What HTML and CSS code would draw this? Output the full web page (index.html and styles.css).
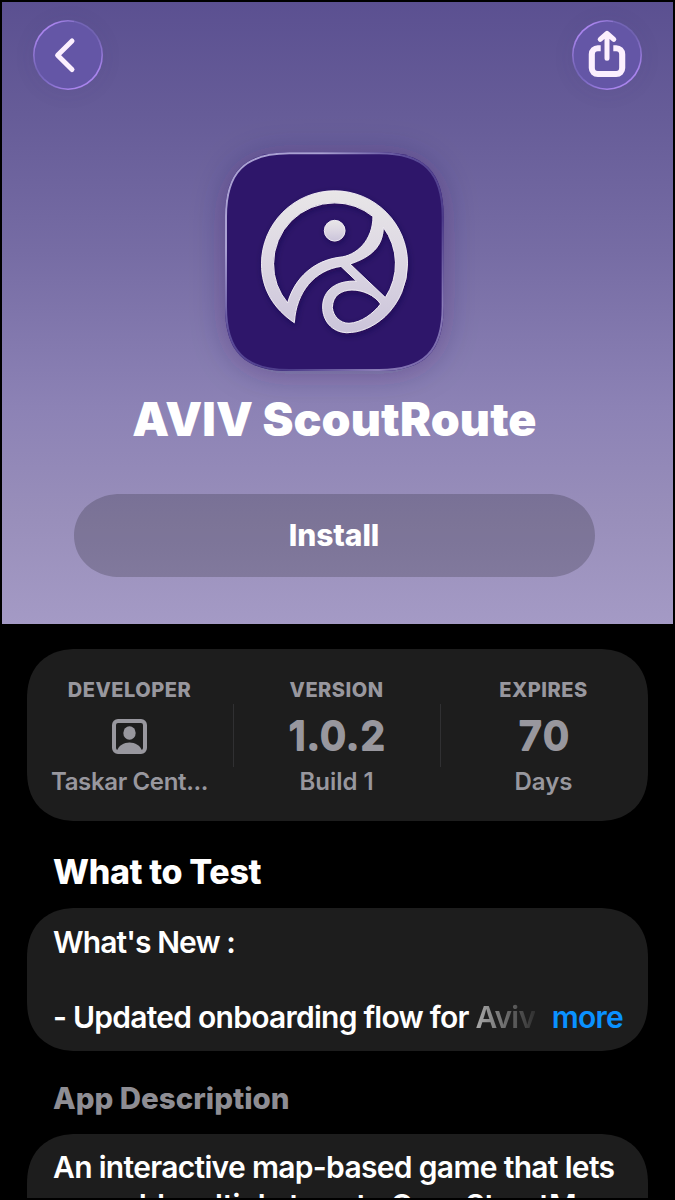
FILE: index.html
```html
<!DOCTYPE html>
<html lang="en">
<head>
<meta charset="utf-8">
<title>AVIV ScoutRoute</title>
<link rel="stylesheet" href="styles.css">
</head>
<body>
<main class="screen">
  <header class="hero">
    <nav class="nav">
      <button class="nav-button" aria-label="Back">
        <svg viewBox="0 0 70 70"><circle class="rim" cx="35" cy="35" r="33.4"/><path class="chevron" d="M39 21L24.6 35.2l14.4 14.3"/></svg>
      </button>
      <button class="nav-button" aria-label="Share">
        <svg viewBox="0 0 70 70"><circle class="rim" cx="35" cy="35" r="33.4"/><path class="tray" d="M28.7 28.2h-2.9a6 6 0 0 0-6 6v13.8a6 6 0 0 0 6 6h18.4a6 6 0 0 0 6-6V34.2a6 6 0 0 0-6-6h-2.9"/><path class="arrow" d="M35 38.3V14M28.2 19.4L35 13.4l6.8 6"/></svg>
      </button>
    </nav>
    <svg class="app-icon" viewBox="0 0 720 720" aria-label="App icon">
      <defs>
        <linearGradient id="edge" x1="0" y1="0" x2="1" y2="1">
          <stop offset="0" stop-color="#aaa1d2"/><stop offset=".22" stop-color="#aaa1d2"/><stop offset=".42" stop-color="#5b4c98"/><stop offset=".65" stop-color="#4d3c8a"/><stop offset=".85" stop-color="#8b7db8"/><stop offset="1" stop-color="#6d5ca4"/>
        </linearGradient>
        <linearGradient id="metal" x1="0" y1="0" x2="0" y2="1">
          <stop offset="0" stop-color="#e8e6e7"/><stop offset=".4" stop-color="#dfdae4"/><stop offset="1" stop-color="#cbc4da"/>
        </linearGradient>
        <filter id="cast" x="-30%" y="-30%" width="160%" height="160%"><feDropShadow dx="0" dy="10" stdDeviation="50" flood-color="#2c2352" flood-opacity=".3"/></filter>
        <filter id="lift" x="-20%" y="-20%" width="140%" height="140%"><feDropShadow dx="3" dy="7" stdDeviation="10" flood-color="#12063f" flood-opacity=".5"/></filter>
      </defs>
      <path filter="url(#cast)" fill="#2d176b" d="M30 230C30 95 88 37 223 37H493C628 37 686 95 686 230V500C686 635 628 693 493 693H223C88 693 30 635 30 500Z"/>
      <path fill="none" stroke="url(#edge)" stroke-width="6" d="M33 230C33 97 90 40 223 40H493C626 40 683 97 683 230V500C683 633 626 690 493 690H223C90 690 33 633 33 500Z"/>
      <g filter="url(#lift)" fill="url(#metal)" stroke="#f1edf4" stroke-width="3" stroke-linejoin="round">
        <path fill-rule="evenodd" d="M238 548C177 507 139.5 448 139.5 371.5A219 219 0 0 1 577.5 371.5A219 219 0 0 1 510 529.6C475 561 435 578 395 578C350 576 323 542 323 501C323 450 365 420 425 424L378 379C300 390 243 455 238 548Z
          M218 488.8A183 183 0 0 1 175.5 371.5A183 183 0 0 1 358.5 188.5A183 183 0 0 1 474 229.5C474 300 425 348 372 352C300 362 240 410 218 488.8Z
          M505 261.8A183 183 0 0 1 511 472.7L405 372C470 350 503 320 505 261.8Z
          M497 492C460 438 352 430 352 503C354 528 375 550 402 550C440 548 475 520 497 492Z"/>
        <circle cx="359" cy="272" r="31"/>
      </g>
    </svg>
    <h1 class="app-name"><span>AVIV ScoutRoute</span></h1>
    <button class="install"><span>Install</span></button>
  </header>

  <section class="card facts">
    <div class="fact">
      <span class="fact-label">DEVELOPER</span>
      <svg class="person" viewBox="0 0 35 35"><rect x="2" y="2" width="31" height="31" rx="4"/><ellipse cx="17.5" cy="14" rx="6.2" ry="6.8"/><path d="M5 32C8 20.5 27 20.5 30 32Z"/></svg>
      <span class="fact-note">Taskar Cent...</span>
    </div>
    <div class="fact">
      <span class="fact-label">VERSION</span>
      <svg class="value" viewBox="0 0 120 35"><text x="60" y="31.2" textLength="96">1.0.2</text></svg>
      <span class="fact-note short">Build 1</span>
    </div>
    <div class="fact">
      <span class="fact-label">EXPIRES</span>
      <svg class="value" viewBox="0 0 120 35"><text x="60" y="31.2" textLength="50">70</text></svg>
      <span class="fact-note short">Days</span>
    </div>
  </section>

  <h2 class="heading"><span>What to Test</span></h2>
  <section class="card notes">
    <p class="whats-new">What's New :</p>
    <p class="update"><span class="update-text">- Updated onboarding flow for <span class="fade">Aviv</span></span><a class="more">more</a></p>
  </section>

  <h2 class="heading subtle"><span>App Description</span></h2>
  <section class="card description">
    <p class="line-one">An interactive map-based game that lets</p>
    <p class="line-two">you add multiple tags to OpenStreetMap</p>
  </section>
</main>
</body>
</html>
```
FILE: styles.css
```css
* { box-sizing: border-box; }
body {
  margin: 0;
  background: #000;
  color: #fff;
  font-family: Inter, "Liberation Sans", sans-serif;
}
p, h1, h2 { margin: 0; white-space: nowrap; }
button { border: 0; padding: 0; font: inherit; color: inherit; }
.screen {
  width: 675px;
  height: 1198px;
  padding: 2px 2px 0;
  overflow: hidden;
}
.hero {
  display: flex;
  flex-direction: column;
  align-items: center;
  height: 622px;
  background: linear-gradient(#5b5091 0%, #665c98 18%, #766ca4 40%, #8c82b5 65%, #988eba 82%, #a49ac5 100%);
}
.nav {
  display: flex;
  justify-content: space-between;
  width: 100%;
  padding: 18px 31px 0;
}
.nav-button {
  width: 70px;
  height: 70px;
  border-radius: 50%;
  background: conic-gradient(from 10deg, #7566b8, #7062b0 45deg, #a984ed 105deg, #a984ed 165deg, #7968c0 215deg, #7565b7 235deg, #a984ed 290deg, #a984ed 325deg, #8872cb);
  box-shadow: 0 2px 22px rgba(60, 45, 110, .08);
}
.nav-button svg { display: block; }
.rim { fill: #6456a6; }
.chevron, .arrow, .tray { fill: none; stroke: #fbeffe; stroke-linecap: round; stroke-linejoin: round; }
.chevron { stroke-width: 5; }
.arrow { stroke-width: 5; }
.tray { stroke-width: 6.1; stroke-linecap: butt; }
.app-icon {
  width: 240px;
  height: 240px;
  margin: 50px 5px 0 0;
  overflow: visible;
}
.app-name {
  margin: 10px 6px 0 0;
  font-size: 46.5px;
  line-height: 58px;
  font-weight: 900;
  letter-spacing: .1px;
}
.install {
  width: 521px;
  height: 83px;
  margin-top: 46px;
  margin-right: 7px;
  padding-bottom: 2px;
  border-radius: 42px;
  background: rgba(0, 0, 0, .19);
  font-size: 30px;
  font-weight: 800;
  letter-spacing: -.1px;
}
.card {
  width: 621px;
  margin-left: 25px;
  border-radius: 44px;
  background: #1d1d1d;
}
@supports (corner-shape: superellipse(1.2)) {
  .card { border-radius: 50px; corner-shape: superellipse(1.2); }
  .install { border-radius: 46px / 41.5px; corner-shape: superellipse(1.05); }
}
.facts {
  display: grid;
  grid-template-columns: repeat(3, 207px);
  height: 172px;
  margin-top: 25px;
  color: #98979e;
}
.fact {
  display: flex;
  flex-direction: column;
  align-items: center;
  margin: 0 1px 0 -1px;
  padding-top: 28px;
  background: linear-gradient(#303032, #303032) left 55px / 1px 63px no-repeat;
}
.fact:first-child { background: none; }
.fact-label { font-size: 20px; line-height: 26px; font-weight: 800; letter-spacing: .5px; }
.person { width: 35px; height: 35px; margin: 16px 0 13px; fill: #98979e; }
.person rect { fill: none; stroke: #98979e; stroke-width: 4; }
.value { width: 120px; height: 35px; margin: 16px 0 13px; overflow: visible; }
.value text {
  font: 600 39.5px Inter, sans-serif;
  fill: #98979e;
  stroke: #98979e;
  stroke-width: 1.8;
  stroke-linejoin: round;
  text-anchor: middle;
}
.fact-note { font-size: 24px; line-height: 30px; font-weight: 600; letter-spacing: -.35px; }
.short { letter-spacing: 0; }
.heading {
  margin: 30px 0 0 51px;
  font-size: 34px;
  line-height: 42px;
  font-weight: 800;
  letter-spacing: -.35px;
}
.notes { height: 143px; margin-top: 15px; padding: 16px 25px 0 26px; }
.notes p, .description p { font-size: 30px; line-height: 37.5px; font-weight: 560; letter-spacing: -.68px; }
.notes .whats-new { letter-spacing: -.9px; }
.notes .update { display: flex; justify-content: space-between; margin-top: 37.5px; letter-spacing: -.75px; }
.fade {
  background: linear-gradient(90deg, #aaa, #303030);
  background-clip: text;
  color: transparent;
}
.more { color: #0a91ff; }
.subtle { margin-top: 26px; color: #8e8d93; font-size: 29.5px; letter-spacing: 0; }
.description { height: 160px; margin-top: 15px; padding: 15px 25px 0 26px; }
```
